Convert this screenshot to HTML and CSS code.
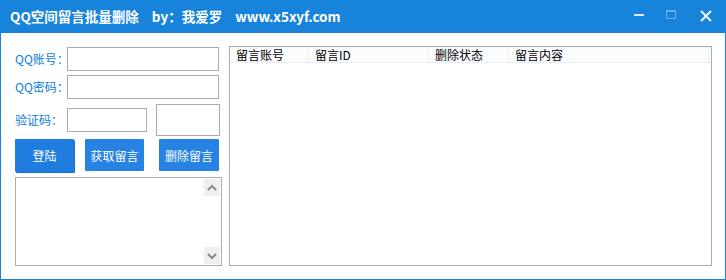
FILE: index.html
```html
<!DOCTYPE html>
<html lang="zh">
<head>
<meta charset="utf-8">
<title>QQ空间留言批量删除</title>
<link rel="stylesheet" href="styles.css">
</head>
<body>
<div class="window">
  <div class="titlebar">
    <div class="title">QQ空间留言批量删除<span class="gap"></span>by：我爱罗<span class="gap"></span>www.x5xyf.com</div>
    <div class="controls">
      <svg class="ctl ctl-min" width="12" height="12" viewBox="0 0 12 12"><rect x="1" y="5" width="10" height="2" fill="#dcebf9"/></svg>
      <svg class="ctl ctl-max" width="12" height="12" viewBox="0 0 12 12"><rect x="1.5" y="1.5" width="9" height="8" fill="none" stroke="#6fb0ea" stroke-width="1"/><rect x="1" y="1" width="10" height="2" fill="#6fb0ea"/></svg>
      <svg class="ctl ctl-close" width="12" height="12" viewBox="0 0 12 12"><path d="M1 1 L11 11 M11 1 L1 11" stroke="#eef5fc" stroke-width="2"/></svg>
    </div>
  </div>
  <div class="main">
    <div class="left">
      <div class="row">
        <span class="label">QQ账号：</span>
        <div class="input wide"></div>
      </div>
      <div class="row row2">
        <span class="label">QQ密码：</span>
        <div class="input wide"></div>
      </div>
      <div class="row row3">
        <span class="label">验证码：</span>
        <div class="input short"></div>
        <div class="captcha"></div>
      </div>
      <div class="buttons">
        <button class="btn btn-login">登陆</button>
        <button class="btn btn-get">获取留言</button>
        <button class="btn btn-del">删除留言</button>
      </div>
      <div class="log">
        <div class="scroll">
          <div class="arrow"><svg width="10" height="8" viewBox="0 0 10 8"><path d="M1 6 L5 2 L9 6" fill="none" stroke="#8a8a8a" stroke-width="2"/></svg></div>
          <div class="arrow"><svg width="10" height="8" viewBox="0 0 10 8"><path d="M1 2 L5 6 L9 2" fill="none" stroke="#8a8a8a" stroke-width="2"/></svg></div>
        </div>
      </div>
    </div>
    <div class="list">
      <div class="header">
        <div class="col c1">留言账号</div>
        <div class="col c2">留言ID</div>
        <div class="col c3">删除状态</div>
        <div class="col c4">留言内容</div>
      </div>
    </div>
  </div>
</div>
</body>
</html>
```
FILE: styles.css
```css
* { box-sizing: border-box; }
html, body { margin: 0; padding: 0; background: #fff; }
body { font-family: "Noto Sans CJK SC", "Liberation Sans", sans-serif; }

.window {
  width: 726px;
  height: 280px;
  border: 1px solid #1783db;
  border-top: none;
  display: flex;
  flex-direction: column;
  background: #fff;
}

.titlebar {
  height: 33px;
  margin: 0 -1px;
  background: #1783db;
  display: flex;
  align-items: center;
  justify-content: space-between;
  padding-left: 10px;
}
.title {
  color: #fff;
  font-weight: bold;
  font-size: 13.5px;
  line-height: 16px;
  padding-bottom: 1px;
  white-space: nowrap;
}
.title .gap { display: inline-block; width: 13px; }

.controls { display: flex; align-items: center; height: 33px; }
.ctl { display: block; }
.ctl-min { margin-right: 20px; margin-top: -3px; }
.ctl-max { margin-right: 23px; margin-top: -3px; }
.ctl-close { margin-right: 14px; margin-top: -1px; }

.main {
  flex: 1;
  display: flex;
  padding: 13px 0 0 14px;
}

.left {
  width: 206px;
  padding-top: 1px;
  display: flex;
  flex-direction: column;
}
.row { display: flex; align-items: center; height: 24px; }
.row2 { margin-top: 4px; }
.row3 { margin-top: 5px; height: 32px; }
.label {
  width: 52px;
  color: #0b7de0;
  font-size: 12px;
  line-height: 14px;
  white-space: nowrap;
}
.input {
  height: 24px;
  border: 1px solid #ababab;
  background: #fff;
}
.wide { width: 152px; }
.short { width: 80px; }
.captcha {
  width: 64px;
  height: 32px;
  margin-left: 9px;
  border: 1px solid #ababab;
}

.buttons {
  margin-top: 3px;
  display: flex;
  align-items: flex-start;
}
.btn {
  height: 32px;
  width: 59px;
  border: none;
  padding: 0;
  background: #2682e3;
  color: #fff;
  font-family: "Noto Sans CJK SC", sans-serif;
  font-size: 12px;
  border-radius: 1px;
}
.btn-login { background: #1f7de0; height: 33px; box-shadow: 1px 1px 0 #1a6fc9; }
.btn-get { margin-left: 11px; width: 59px; }
.btn-del { margin-left: 15px; width: 60px; }

.log {
  margin-top: 5px;
  width: 207px;
  height: 89px;
  border: 1px solid #ababab;
  display: flex;
  justify-content: flex-end;
  padding: 1px 1px 1px 0;
}
.scroll {
  width: 16px;
  display: flex;
  flex-direction: column;
  justify-content: space-between;
}
.arrow {
  height: 17px;
  background: #efefef;
  display: flex;
  align-items: center;
  justify-content: center;
}
.arrow svg { display: block; }

.list {
  margin-left: 8px;
  width: 483px;
  height: 220px;
  border: 1px solid #ababab;
}
.header {
  display: flex;
  height: 16px;
  background: #fbfcfe;
  border-bottom: 1px solid #e3edf9;
}
.col {
  font-size: 12px;
  line-height: 15px;
  color: #000;
  padding-left: 6px;
  border-right: 1px solid #e8eef6;
  white-space: nowrap;
}
.c1 { width: 79px; }
.c2 { width: 120px; }
.c3 { width: 80px; }
.c4 { width: 200px; }
```
